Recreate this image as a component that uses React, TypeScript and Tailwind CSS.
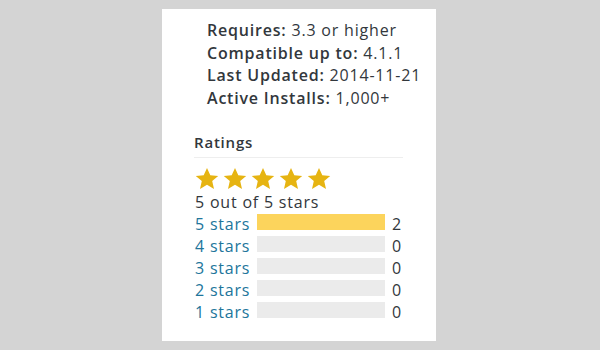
const meta = [
  { label: "Requires:", value: "3.3 or higher" },
  { label: "Compatible up to:", value: "4.1.1" },
  { label: "Last Updated:", value: "2014-11-21" },
  { label: "Active Installs:", value: "1,000+" },
];

const ratings = [
  { stars: 5, count: 2 },
  { stars: 4, count: 0 },
  { stars: 3, count: 0 },
  { stars: 2, count: 0 },
  { stars: 1, count: 0 },
];

const total = 2;

function Star() {
  return (
    <svg viewBox="0 0 24 24" width={28} height={24} className="fill-[#e6b412]">
      <path d="M12 1l3.3 7.2 7.9.7-6 5.2 1.8 7.8L12 17.8l-7 4.1 1.8-7.8-6-5.2 7.9-.7z" />
    </svg>
  );
}

export default function App() {
  return (
    <div className="w-[600px] h-[350px] bg-[#d4d4d4] pt-[9px] pl-[162px] font-['Open_Sans',sans-serif] text-[#32373c] tracking-[0.05em]">
      <div className="w-[274px] h-[332px] bg-white">
        <ul className="pt-[10px] pl-[45px] text-[16px] leading-[22.5px]">
          {meta.map((m) => (
            <li key={m.label}>
              <span className="font-semibold">{m.label}</span> {m.value}
            </li>
          ))}
        </ul>

        <div className="mt-[23px] ml-[32px] w-[209px]">
          <div className="text-[15px] font-semibold leading-[20px] pb-[5px] border-b border-[#eeeeee]">
            Ratings
          </div>
          <div className="flex mt-[9px] -ml-[1px]">
            {[0, 1, 2, 3, 4].map((i) => (
              <Star key={i} />
            ))}
          </div>
          <div className="text-[16px] leading-[20px] mt-[1px] ml-[1px]">5 out of 5 stars</div>
          <div className="flex flex-col gap-[6px] mt-[2px]">
            {ratings.map((r) => (
              <div key={r.stars} className="flex items-start h-[16px] text-[16px] leading-[16px]">
                <span className="w-[63px] pl-[1px] pt-[2px] text-[#21759b]">{r.stars} stars</span>
                <div className="w-[128px] h-[16px] bg-[#ebebeb]">
                  <div className="h-full bg-[#fcd45c]" style={{ width: `${(r.count / total) * 100}%` }} />
                </div>
                <span className="ml-[7px] pt-[2px]">{r.count}</span>
              </div>
            ))}
          </div>
        </div>
      </div>
    </div>
  );
}
